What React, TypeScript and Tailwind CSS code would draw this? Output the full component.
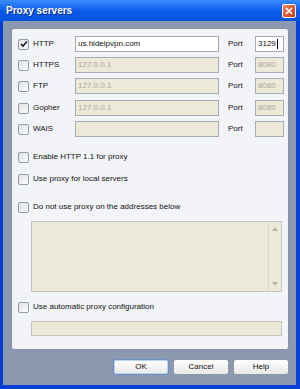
import React from 'react';

const font = { fontFamily: '"Liberation Sans", Arial, sans-serif' };

const Check: React.FC<{ checked?: boolean }> = ({ checked }) => (
  <div className="w-[11px] h-[11px] shrink-0 rounded-[2px] border border-[#8e9bb0] bg-gradient-to-br from-[#e2e2e2] to-[#fbfbfb] flex items-center justify-center">
    {checked && (
      <svg width="8" height="8" viewBox="0 0 8 8">
        <path d="M1 4 L3 6 L7 1.5" stroke="#1a1a1a" strokeWidth="1.6" fill="none" />
      </svg>
    )}
  </div>
);

const Field: React.FC<{ value?: string; disabled?: boolean; className?: string; cursor?: boolean }> = ({
  value,
  disabled,
  className,
  cursor,
}) => (
  <div
    className={`h-[16px] border border-[#a5acb5] flex items-center px-[2px] text-[8px] ${
      disabled ? 'bg-[#ece9d8] text-[#aca899]' : 'bg-white text-[#111]'
    } ${className || ''}`}
  >
    {value}
    {cursor && <span className="inline-block w-px h-[10px] bg-black ml-px" />}
  </div>
);

const ProxyRow: React.FC<{ label: string; checked?: boolean; host?: string; port?: string; enabled?: boolean }> = ({
  label,
  checked,
  host,
  port,
  enabled,
}) => (
  <div className="h-[16px] flex items-center">
    <div className="ml-[6px] w-[15px]">
      <Check checked={checked} />
    </div>
    <span className="w-[42px] text-[8px] text-[#111]">{label}</span>
    <Field value={host} disabled={!enabled} className="w-[144px]" />
    <span className="ml-[9px] w-[27px] text-[8px] text-[#111]">Port</span>
    <Field value={port} disabled={!enabled} className="w-[29px]" cursor={enabled} />
  </div>
);

const Option: React.FC<{ label: string; className?: string }> = ({ label, className }) => (
  <div className={`h-[16px] flex items-center ${className || ''}`}>
    <div className="ml-[6px] w-[15px]">
      <Check />
    </div>
    <span className="text-[8px] text-[#111]">{label}</span>
  </div>
);

const Btn: React.FC<{ label: string; focused?: boolean }> = ({ label, focused }) => (
  <div
    className={`w-[56px] h-[16px] rounded-[3px] border flex items-center justify-center text-[8px] text-[#111] bg-gradient-to-b from-white to-[#e8e8e4] ${
      focused ? 'border-[#6d8fc2] shadow-[inset_0_0_0_1px_#b9d3f5]' : 'border-[#8f98a6]'
    }`}
  >
    {label}
  </div>
);

export default function App() {
  return (
    <div style={font} className="w-[300px] h-[389px] flex flex-col bg-[#0a3fd8] select-none">
      <div className="h-[21px] shrink-0 flex items-center bg-gradient-to-b from-[#3c8cfb] via-[#0b5ded] to-[#0551e0] relative">
        <span className="ml-[6px] text-[10px] font-bold text-white [text-shadow:1px_1px_0_#0a2a8a]">Proxy servers</span>
        <div className="absolute right-[4px] top-[4px] w-[14px] h-[14px] rounded-[2px] border border-white bg-gradient-to-br from-[#f08a6a] via-[#e05a32] to-[#c8401e] flex items-center justify-center">
          <svg width="8" height="8" viewBox="0 0 8 8">
            <path d="M1 1 L7 7 M7 1 L1 7" stroke="white" strokeWidth="1.7" />
          </svg>
        </div>
      </div>
      <div className="flex-1 ml-[3px] mr-[4px] mb-[4px] bg-[#8a98b0] flex flex-col">
        <div className="mt-[7px] ml-[8px] mr-[7px] h-[322px] rounded-[3px] border border-[#8791a3] bg-[#f3f4f7] flex flex-col">
          <div className="mt-[7px]">
            <ProxyRow label="HTTP" checked host="us.hideipvpn.com" port="3129" enabled />
          </div>
          <div className="mt-[5px]">
            <ProxyRow label="HTTPS" host="127.0.0.1" port="8080" />
          </div>
          <div className="mt-[5px]">
            <ProxyRow label="FTP" host="127.0.0.1" port="8080" />
          </div>
          <div className="mt-[6px]">
            <ProxyRow label="Gopher" host="127.0.0.1" port="8080" />
          </div>
          <div className="mt-[5px]">
            <ProxyRow label="WAIS" />
          </div>
          <Option label="Enable HTTP 1.1 for proxy" className="mt-[12px]" />
          <Option label="Use proxy for local servers" className="mt-[6px]" />
          <Option label="Do not use proxy on the addresses below" className="mt-[12px]" />
          <div className="mt-[6px] ml-[19px] mr-[6px] h-[71px] border border-[#c3c6c0] bg-[#ece9d8] flex justify-end">
            <div className="w-[13px] border-l border-[#dcd9c8] flex flex-col items-center justify-between py-[5px]">
              <svg width="6" height="4" viewBox="0 0 6 4">
                <path d="M0 4 L3 0 L6 4 Z" fill="#b9b6a8" />
              </svg>
              <svg width="6" height="4" viewBox="0 0 6 4">
                <path d="M0 0 L3 4 L6 0 Z" fill="#b9b6a8" />
              </svg>
            </div>
          </div>
          <Option label="Use automatic proxy configuration" className="mt-[7px]" />
          <div className="mt-[6px] ml-[19px] mr-[6px] h-[15px] border border-[#c3c6c0] bg-[#ece9d8]" />
        </div>
        <div className="mt-[9px] mr-[7px] flex justify-end gap-[4px]">
          <Btn label="OK" focused />
          <Btn label="Cancel" />
          <Btn label="Help" />
        </div>
      </div>
    </div>
  );
}
